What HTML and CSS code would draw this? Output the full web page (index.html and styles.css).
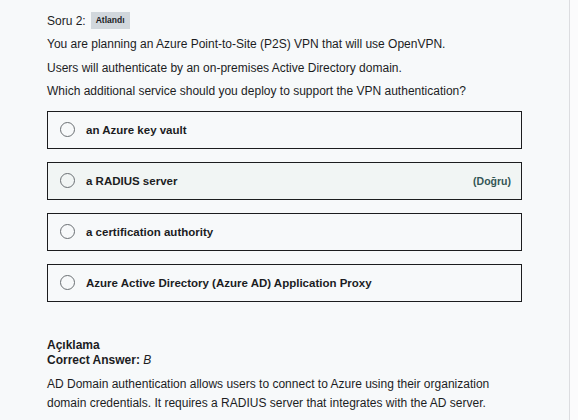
FILE: index.html
```html
<!DOCTYPE html>
<html>
<head>
<meta charset="utf-8">
<link rel="stylesheet" href="styles.css">
</head>
<body>
<div class="page">
  <main class="content">
    <div class="head">
      <span class="q-num">Soru 2:</span>
      <span class="badge">Atlandı</span>
    </div>
    <p class="q-line">You are planning an Azure Point-to-Site (P2S) VPN that will use OpenVPN.</p>
    <p class="q-line">Users will authenticate by an on-premises Active Directory domain.</p>
    <p class="q-line">Which additional service should you deploy to support the VPN authentication?</p>
    <ul class="options">
      <li class="option"><span class="radio"></span><span class="opt-text">an Azure key vault</span></li>
      <li class="option correct"><span class="radio"></span><span class="opt-text">a RADIUS server</span><span class="tag">(Doğru)</span></li>
      <li class="option"><span class="radio"></span><span class="opt-text">a certification authority</span></li>
      <li class="option"><span class="radio"></span><span class="opt-text">Azure Active Directory (Azure AD) Application Proxy</span></li>
    </ul>
    <section class="explain">
      <div class="ex-title">Açıklama</div>
      <div class="ex-answer">Correct Answer: <em>B</em></div>
      <p class="ex-text">AD Domain authentication allows users to connect to Azure using their organization domain credentials. It requires a RADIUS server that integrates with the AD server.</p>
    </section>
  </main>
  <div class="track"></div>
</div>
</body>
</html>
```
FILE: styles.css
```css
html, body {
  margin: 0;
  padding: 0;
  height: 100%;
  overflow: hidden;
}
body {
  font-family: "Liberation Sans", Arial, sans-serif;
  color: #1c1d1f;
  background: #ffffff;
}
.page {
  display: flex;
  height: 420px;
}
.content {
  width: 570px;
  background: #f7f9fa;
  border-right: 1px solid #dcdde0;
  padding: 12px 0 0 47px;
  box-sizing: border-box;
}
.track {
  flex: 1;
  background: #fbfbfc;
}
.head {
  display: flex;
  align-items: center;
  gap: 5px;
  height: 17px;
  margin-bottom: 4px;
}
.q-num {
  font-size: 12px;
}
.badge {
  background: #d1d7dc;
  font-size: 8.5px;
  font-weight: bold;
  padding: 0 5px;
  height: 17px;
  line-height: 17px;
}
.q-line {
  margin: 0;
  font-size: 12px;
  line-height: 23.5px;
}
.options {
  list-style: none;
  margin: 7px 0 0 0;
  padding: 0;
  width: 475px;
  display: flex;
  flex-direction: column;
  gap: 13px;
}
.option {
  display: flex;
  align-items: center;
  height: 38px;
  border: 1px solid #1c1d1f;
  box-sizing: border-box;
  padding: 0 10px 0 12px;
}
.option.correct {
  background: #f1f5f4;
}
.radio {
  width: 13px;
  height: 13px;
  border: 1px solid #6a6f73;
  border-radius: 50%;
  margin-right: 11px;
  flex: none;
}
.opt-text {
  font-size: 11.5px;
  font-weight: bold;
  flex: 1;
}
.tag {
  font-size: 10.5px;
  font-weight: bold;
  color: #335555;
}
.explain {
  margin-top: 36px;
}
.ex-title, .ex-answer {
  font-size: 12px;
  font-weight: bold;
  line-height: 15px;
}
.ex-answer em {
  font-weight: normal;
}
.ex-text {
  margin: 7px 0 0 0;
  font-size: 12px;
  line-height: 19px;
  width: 460px;
}
```
